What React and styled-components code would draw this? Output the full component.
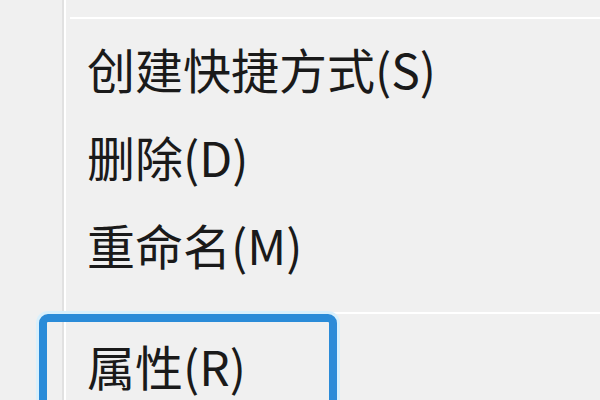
import styled, { createGlobalStyle } from 'styled-components';

const GlobalStyle = createGlobalStyle`
  html, body {
    margin: 0;
    padding: 0;
    background: #f0f0f0;
    overflow: hidden;
  }
`;

const items = [
  { label: '创建快捷方式(S)' },
  { label: '删除(D)' },
  { label: '重命名(M)' },
  { separator: true },
  { label: '属性(R)', marked: true },
];

const Menu = styled.div`
  width: 600px;
  height: 400px;
  display: flex;
  background: #f0f0f0;
  overflow: hidden;
  font-family: 'Noto Sans CJK SC', 'Noto Sans', sans-serif;
`;

const IconColumn = styled.div`
  width: 62px;
  flex-shrink: 0;
  border-right: 2px solid #e1e1e1;
`;

const Body = styled.div`
  flex: 1;
  display: flex;
  flex-direction: column;
  border-left: 2px solid #ffffff;
`;

const Separator = styled.div`
  height: 2px;
  background: #dcdcdc;
  border-bottom: 2px solid #ffffff;
  margin: ${(p) => (p.top ? '17px 0 7px 4px' : '22px 0 9px 4px')};
`;

const Item = styled.div`
  position: relative;
  height: 88px;
  flex-shrink: 0;
  display: flex;
  align-items: center;
  padding-left: 21px;
  font-size: 48px;
  color: #1a1a1a;
  white-space: nowrap;

  ${(p) =>
    p.marked &&
    `
    &::after {
      content: '';
      position: absolute;
      left: -27px;
      top: -9px;
      width: 298px;
      bottom: -30px;
      border: 8px solid #2a8bd8;
      border-radius: 9px;
      box-sizing: border-box;
      box-shadow: 0 0 0 3px #d9f0fc;
    }
  `}
`;

const Label = styled.span`
  position: relative;
  top: -2px;
`;

export default function App() {
  return (
    <>
      <GlobalStyle />
      <Menu>
        <IconColumn />
        <Body>
          <Separator top />
          {items.map((it, i) =>
            it.separator ? (
              <Separator key={i} />
            ) : (
              <Item key={i} marked={it.marked}>
                <Label>{it.label}</Label>
              </Item>
            )
          )}
        </Body>
      </Menu>
    </>
  );
}
